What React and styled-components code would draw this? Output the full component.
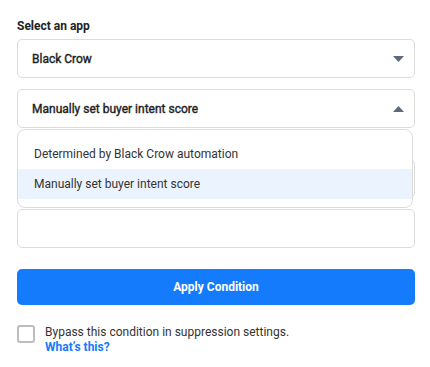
import styled, { createGlobalStyle } from "styled-components";

const GlobalStyle = createGlobalStyle`
  body {
    margin: 0;
    background: #ffffff;
    font-family: Roboto, "Liberation Sans", sans-serif;
    color: #2b2b2b;
  }
`;

const Arrow = ({ up }) => (
  <svg width="11" height="6" viewBox="0 0 11 6">
    <path d={up ? "M0 6 L5.5 0 L11 6 Z" : "M0 0 L11 0 L5.5 6 Z"} fill="#5c6a79" />
  </svg>
);

const App = () => {
  return (
    <>
      <GlobalStyle />
      <StPanel>
        <StLabel>Select an app</StLabel>
        <StSelect>
          <StValue>Black Crow</StValue>
          <Arrow />
        </StSelect>

        <StField>
          <StSelect>
            <StValue>Manually set buyer intent score</StValue>
            <Arrow up />
          </StSelect>
          <StMenu>
            <StOption>Determined by Black Crow automation</StOption>
            <StOption $active>Manually set buyer intent score</StOption>
          </StMenu>
        </StField>

        <StInput $gap={31} />
        <StInput $gap={11} />

        <StButton>Apply Condition</StButton>

        <StCheckRow>
          <StCheckbox />
          <StCheckText>
            <span>Bypass this condition in suppression settings.</span>
            <StLink>What’s this?</StLink>
          </StCheckText>
        </StCheckRow>
      </StPanel>
    </>
  );
};

export default App;

const StPanel = styled.div`
  display: flex;
  flex-direction: column;
  width: 398px;
  padding: 19px 15px 0 17px;
`;

const StLabel = styled.div`
  font-size: 12px;
  font-weight: 700;
  color: #222;
  line-height: 14px;
  margin-bottom: 6px;
`;

const StSelect = styled.div`
  display: flex;
  align-items: center;
  justify-content: space-between;
  height: 39px;
  box-sizing: border-box;
  padding: 0 10px 0 14px;
  border: 1px solid #dcdcdc;
  border-radius: 5px;
  background: #fff;
`;

const StValue = styled.span`
  font-size: 12px;
  font-weight: 400;
  color: #1f1f1f;
  -webkit-text-stroke: 0.4px #1f1f1f;
`;

const StField = styled.div`
  position: relative;
  margin-top: 11px;
`;

const StMenu = styled.div`
  position: absolute;
  top: 40px;
  left: 0;
  width: 396px;
  box-sizing: border-box;
  padding: 9px 0 8px;
  border: 1px solid #dcdcdc;
  border-radius: 8px;
  background: #fff;
  z-index: 2;
`;

const StOption = styled.div`
  height: 30px;
  display: flex;
  align-items: center;
  padding-left: 16px;
  font-size: 12px;
  color: #333;
  background: ${(p) => (p.$active ? "#ebf3fe" : "transparent")};
`;

const StInput = styled.div`
  height: 39px;
  box-sizing: border-box;
  border: 1px solid #dcdcdc;
  border-radius: 5px;
  margin-top: ${(p) => p.$gap}px;
`;

const StButton = styled.button`
  margin-top: 21px;
  height: 36px;
  border: none;
  border-radius: 5px;
  background: #147bfc;
  color: #fff;
  font-family: Roboto, "Liberation Sans", sans-serif;
  font-size: 12px;
  font-weight: 700;
`;

const StCheckRow = styled.div`
  display: flex;
  align-items: flex-start;
  gap: 10px;
  margin-top: 20px;
`;

const StCheckbox = styled.div`
  width: 18px;
  height: 18px;
  box-sizing: border-box;
  border: 2px solid #bdbdbd;
  border-radius: 3px;
  flex-shrink: 0;
`;

const StCheckText = styled.div`
  display: flex;
  flex-direction: column;
  font-size: 12px;
  line-height: 15px;
  color: #333;
`;

const StLink = styled.a`
  color: #147bfc;
  font-weight: 700;
`;
